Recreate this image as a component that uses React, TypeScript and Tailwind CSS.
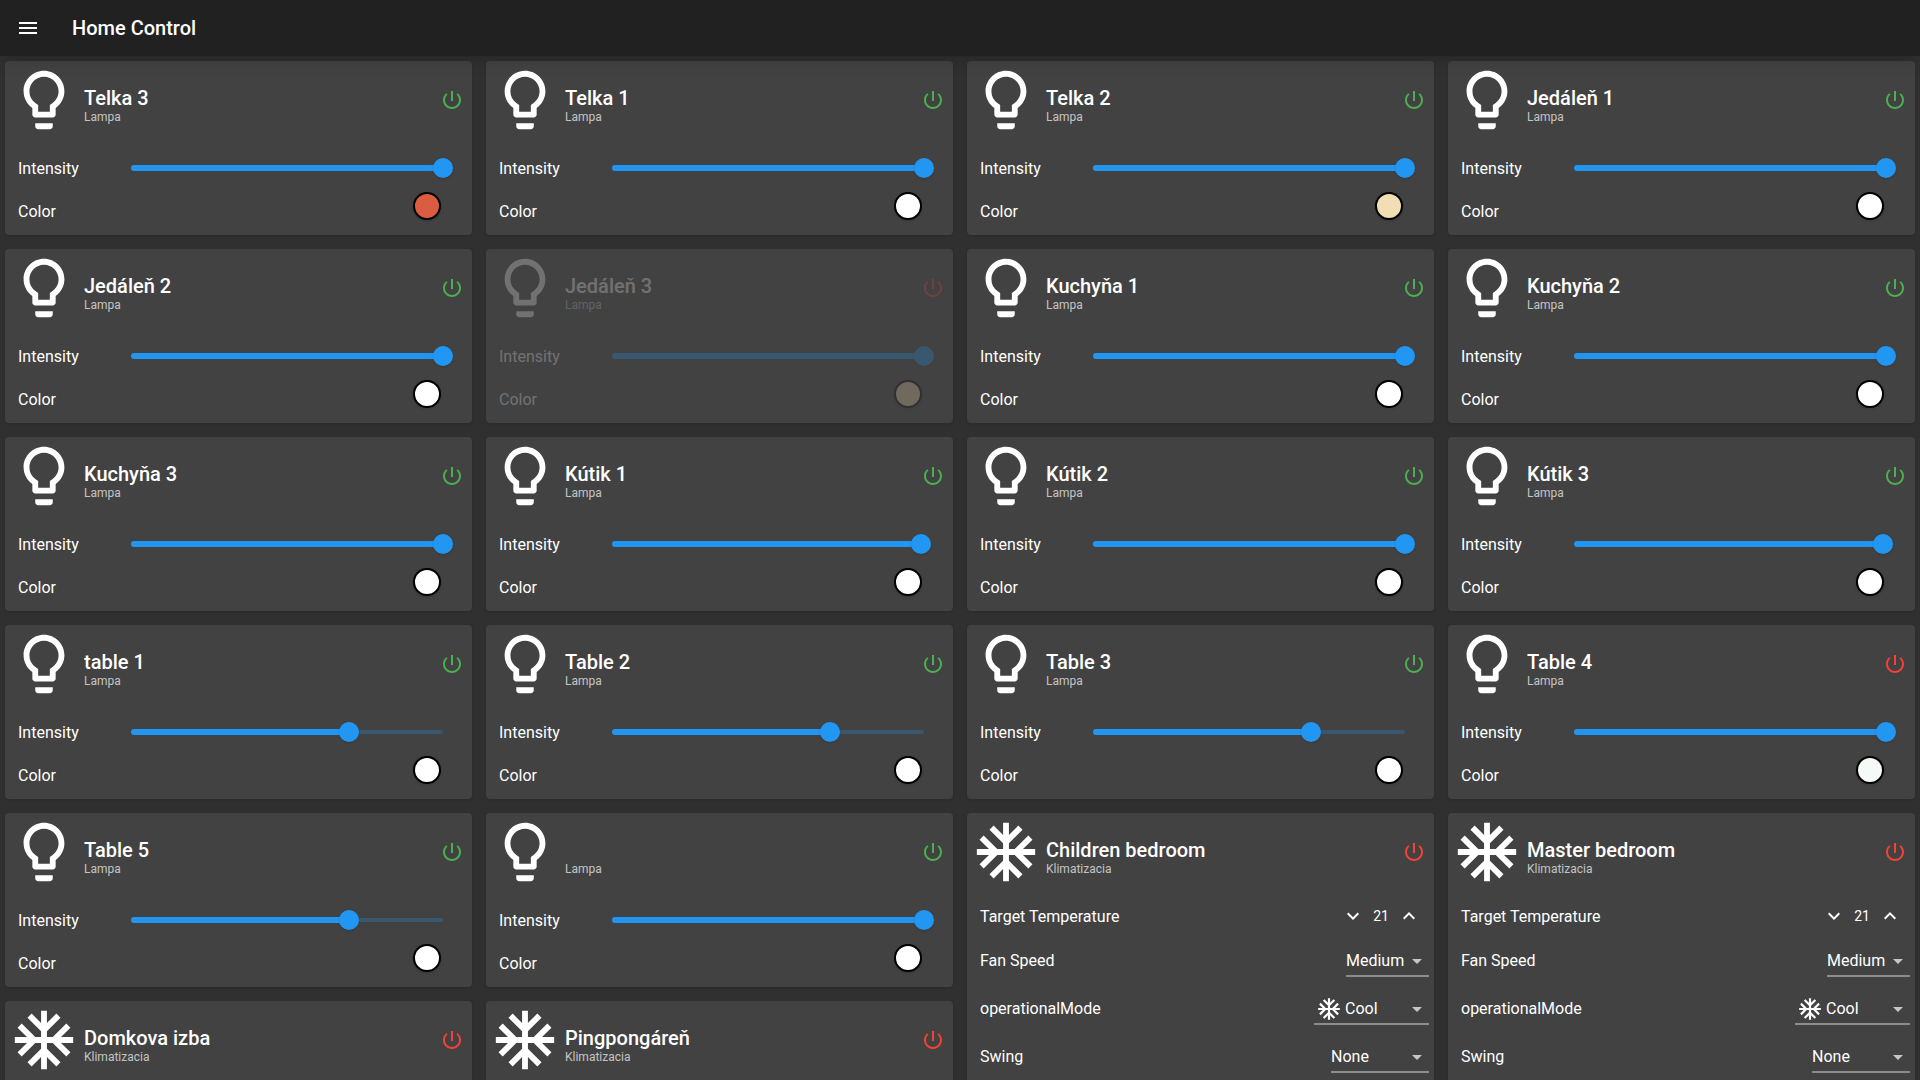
import React, { useState } from 'react';

const BULB =
  'M9 21c0 .55.45 1 1 1h4c.55 0 1-.45 1-1v-1H9v1zm3-19C8.14 2 5 5.14 5 9c0 2.38 1.19 4.47 3 5.74V17c0 .55.45 1 1 1h6c.55 0 1-.45 1-1v-2.26c1.81-1.27 3-3.36 3-5.74 0-3.86-3.14-7-7-7zm2.85 11.1l-.85.6V16h-4v-2.3l-.85-.6A4.997 4.997 0 0 1 7 9c0-2.76 2.24-5 5-5s5 2.24 5 5c0 1.63-.8 3.16-2.15 4.1z';
const SNOWFLAKE =
  'M22 11h-4.17l3.24-3.24-1.41-1.42L15 11h-2V9l4.66-4.66-1.42-1.41L13 6.17V2h-2v4.17L7.76 2.93 6.34 4.34 11 9v2H9L4.34 6.34 2.93 7.76 6.17 11H2v2h4.17l-3.24 3.24 1.41 1.42L9 13h2v2l-4.66 4.66 1.42 1.41L11 17.83V22h2v-4.17l3.24 3.24 1.42-1.41L13 15v-2h2l4.66 4.66 1.41-1.42L17.83 13H22v-2z';
const POWER =
  'M13 3h-2v10h2V3zm4.83 2.17l-1.42 1.42C17.99 7.86 19 9.81 19 12c0 3.87-3.13 7-7 7s-7-3.13-7-7c0-2.19 1.01-4.14 2.58-5.42L6.17 5.17C4.23 6.82 3 9.26 3 12c0 4.97 4.03 9 9 9s9-4.03 9-9c0-2.74-1.23-5.18-3.17-6.83z';
const MENU = 'M3 18h18v-2H3v2zm0-5h18v-2H3v2zm0-7v2h18V6H3z';
const EXPAND_MORE = 'M16.59 8.59L12 13.17 7.41 8.59 6 10l6 6 6-6z';
const EXPAND_LESS = 'M12 8l-6 6 1.41 1.41L12 10.83l4.59 4.58L18 14z';
const DROP_DOWN = 'M7 10l5 5 5-5z';

function Icon({ d, className }: { d: string; className: string }) {
  return (
    <svg viewBox="0 0 24 24" fill="currentColor" aria-hidden="true" className={className}>
      <path d={d} />
    </svg>
  );
}

type Lamp = {
  kind: 'lamp';
  name: string;
  on: boolean;
  level: number;
  color: string;
  offline?: boolean;
};
type Climate = { kind: 'climate'; name: string };
type Device = Lamp | Climate;

const lamp = (name: string, level = 100, color = '#ffffff', on = true, offline = false): Lamp => ({
  kind: 'lamp',
  name,
  level,
  color,
  on,
  offline,
});

const devices: Device[] = [
  lamp('Telka 3', 100, '#db5c41'),
  lamp('Telka 1'),
  lamp('Telka 2', 100, '#f1deb5'),
  lamp('Jedáleň 1'),
  lamp('Jedáleň 2'),
  lamp('Jedáleň 3', 100, '#f5deb3', false, true),
  lamp('Kuchyňa 1'),
  lamp('Kuchyňa 2'),
  lamp('Kuchyňa 3'),
  lamp('Kútik 1', 99),
  lamp('Kútik 2'),
  lamp('Kútik 3', 99),
  lamp('table 1', 70),
  lamp('Table 2', 70),
  lamp('Table 3', 70),
  lamp('Table 4', 100, '#f5faf6', false),
  lamp('Table 5', 70),
  lamp(''),
  { kind: 'climate', name: 'Children bedroom' },
  { kind: 'climate', name: 'Master bedroom' },
  { kind: 'climate', name: 'Domkova izba' },
  { kind: 'climate', name: 'Pingpongáreň' },
];

const COLUMNS = [0, 1, 2, 3];

function CardHeader({ icon, name, type, on }: { icon: string; name: string; type: string; on: boolean }) {
  return (
    <div className="flex items-center gap-[5px] py-1 pr-2 pl-1">
      <Icon d={icon} className="size-[70px] shrink-0" />
      <div className="min-w-0 flex-1 pt-[10px]">
        <h2 className="h-6 truncate text-xl leading-6 font-medium">{name}</h2>
        <p className="text-xs leading-[14px] text-white/70">{type}</p>
      </div>
      <button type="button" aria-label={`Power ${name}`} aria-pressed={on}>
        <Icon d={POWER} className={on ? 'size-6 text-[#4caf50]' : 'size-6 text-[#f44336]'} />
      </button>
    </div>
  );
}

function LampCard({ device, id }: { device: Lamp; id: string }) {
  const [level, setLevel] = useState(device.level);
  return (
    <article className="rounded bg-[#424242] shadow">
      <div className={device.offline ? 'opacity-25' : ''}>
        <CardHeader icon={BULB} name={device.name} type="Lampa" on={device.on} />
        <div className="flex h-[58px] items-center pr-[29px] pl-[13px]">
          <label htmlFor={`${id}-level`} className="w-[113px] shrink-0 pt-0.5">
            Intensity
          </label>
          <div className="relative flex h-5 flex-1 items-center">
            <div className="h-1 w-full rounded-full bg-[#2196f3]/25" />
            <div className="absolute left-0 h-[6px] rounded-full bg-[#2196f3]" style={{ width: `${level}%` }} />
            <div
              className="absolute size-5 -translate-x-1/2 rounded-full bg-[#2196f3] shadow"
              style={{ left: `${level}%` }}
            />
            <input
              id={`${id}-level`}
              type="range"
              disabled={device.offline}
              value={level}
              onChange={(e) => setLevel(Number(e.target.value))}
              className="absolute inset-0 size-full cursor-pointer opacity-0"
            />
          </div>
        </div>
        <div className="flex justify-between pr-[31px] pb-[11px] pl-[13px]">
          <label htmlFor={`${id}-color`} className="pt-[3px]">
            Color
          </label>
          <button
            id={`${id}-color`}
            type="button"
            className="-mt-[5px] size-7 rounded-full border-2 border-black shadow"
            style={{ backgroundColor: device.color }}
          />
        </div>
      </div>
    </article>
  );
}

function SelectRow({
  id,
  label,
  options,
  width,
  icon,
}: {
  id: string;
  label: string;
  options: string[];
  width: string;
  icon?: string;
}) {
  return (
    <div className="flex h-12 items-center justify-between pr-[5px] pl-[13px]">
      <label htmlFor={id} className="pb-0.5">
        {label}
      </label>
      <div className={`relative flex items-center border-b-2 border-white/40 ${width}`}>
        {icon && <Icon d={icon} className="pointer-events-none absolute left-[2px] size-[26px]" />}
        <select
          id={id}
          className={`h-7 w-full appearance-none bg-transparent outline-none ${icon ? 'pl-[31px]' : ''}`}
        >
          {options.map((o) => (
            <option key={o} className="bg-[#424242]">
              {o}
            </option>
          ))}
        </select>
        <Icon d={DROP_DOWN} className="pointer-events-none absolute right-0 size-6 text-white/70" />
      </div>
    </div>
  );
}

function ClimateCard({ device, id }: { device: Climate; id: string }) {
  const [target, setTarget] = useState(21);
  return (
    <article className="rounded bg-[#424242] pb-3 shadow">
      <CardHeader icon={SNOWFLAKE} name={device.name} type="Klimatizacia" on={false} />
      <div className="flex h-[47px] items-center justify-between px-[13px] pt-[3px]">
        <span className="pt-0.5">Target Temperature</span>
        <div className="flex items-center">
          <button type="button" aria-label="Lower target temperature" onClick={() => setTarget(target - 1)}>
            <Icon d={EXPAND_MORE} className="size-6" />
          </button>
          <output className="w-8 text-center text-sm">{target}</output>
          <button type="button" aria-label="Raise target temperature" onClick={() => setTarget(target + 1)}>
            <Icon d={EXPAND_LESS} className="size-6" />
          </button>
        </div>
      </div>
      <SelectRow id={`${id}-fan`} label="Fan Speed" options={['Medium', 'Low', 'High']} width="w-[83px]" />
      <SelectRow
        id={`${id}-mode`}
        label="operationalMode"
        options={['Cool', 'Heat', 'Dry', 'Auto']}
        width="w-[115px]"
        icon={SNOWFLAKE}
      />
      <SelectRow id={`${id}-swing`} label="Swing" options={['None', 'Vertical', 'Horizontal']} width="w-[98px]" />
    </article>
  );
}

export default function App() {
  return (
    <div className="flex h-screen flex-col bg-[#303030] font-[Roboto,sans-serif] text-base text-white">
      <header className="z-10 flex h-14 shrink-0 items-center gap-8 bg-[#212121] px-4 shadow-lg">
        <button type="button" aria-label="Open menu">
          <Icon d={MENU} className="size-6" />
        </button>
        <h1 className="text-xl font-medium">Home Control</h1>
      </header>
      <main className="grid flex-1 grid-cols-4 items-start gap-[14px] overflow-y-auto p-[5px] [scrollbar-width:none]">
        {COLUMNS.map((column) => (
          <div key={column} className="flex min-w-0 flex-col gap-[14px]">
            {devices.map((d, i) => {
              if (i % COLUMNS.length !== column) return null;
              return d.kind === 'lamp' ? (
                <LampCard key={i} id={`device-${i}`} device={d} />
              ) : (
                <ClimateCard key={i} id={`device-${i}`} device={d} />
              );
            })}
          </div>
        ))}
      </main>
    </div>
  );
}
